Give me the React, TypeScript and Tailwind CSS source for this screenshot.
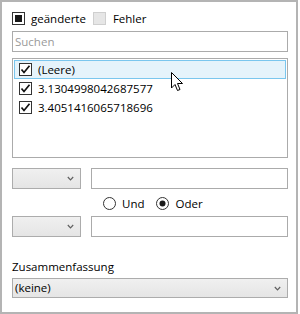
import React from "react";

const font = { fontFamily: '"Open Sans", "Noto Sans", sans-serif' };

function Check() {
  return (
    <svg width="13" height="13" viewBox="0 0 13 13" className="block">
      <rect x="0.5" y="0.5" width="12" height="12" fill="#fff" stroke="#333" />
      <path d="M2.5 6.5 L5 9.5 L10.5 2.8" fill="none" stroke="#111" strokeWidth="1.7" />
    </svg>
  );
}

function Chevron() {
  return (
    <svg width="7" height="5" viewBox="0 0 7 5" className="block">
      <path d="M0.8 1 L3.5 3.8 L6.2 1" fill="none" stroke="#606060" strokeWidth="1.2" />
    </svg>
  );
}

function Combo() {
  return (
    <div className="w-[69px] h-[21px] border border-[#acacac] bg-gradient-to-b from-[#f0f0f0] to-[#e5e5e5] flex items-center justify-end pr-[6px]">
      <Chevron />
    </div>
  );
}

function Radio({ checked }: { checked?: boolean }) {
  return (
    <svg width="13" height="13" viewBox="0 0 13 13" className="block">
      <circle cx="6.5" cy="6.5" r="6" fill="#fff" stroke="#333" />
      {checked && <circle cx="6.5" cy="6.5" r="3" fill="#1a1a1a" />}
    </svg>
  );
}

export default function App() {
  const items = ["(Leere)", "3.1304998042687577", "3.4051416065718696"];
  return (
    <div className="w-[300px] h-[314px] bg-white text-black text-[11.5px] leading-none" style={font}>
      <div className="relative w-[298px] h-[314px] border-2 border-[#b4b4b4] pl-[10px] pr-[8px] pt-[10px] flex flex-col">
        <div className="flex items-center h-[13px]">
          <div className="w-[13px] h-[13px] border border-[#333] bg-white flex items-center justify-center">
            <div className="w-[7px] h-[7px] bg-[#1a1a1a]" />
          </div>
          <span className="ml-[6px]">geänderte</span>
          <div className="ml-[7px] w-[13px] h-[13px] border border-[#cfcfcf] bg-[#e6e6e6]" />
          <span className="ml-[7px]">Fehler</span>
        </div>
        <div className="mt-[6px] h-[21px] border border-[#ababab] flex items-center pl-[2px] text-[#9a9a9a]">
          Suchen
        </div>
        <div className="mt-[6px] h-[100px] border border-[#ababab] p-px flex flex-col">
          {items.map((t, i) => (
            <div
              key={t}
              className={
                "h-[19px] flex items-center pl-[4px] border " +
                (i === 0 ? "bg-[#e5f3fb] border-[#7ac6ee]" : "border-transparent")
              }
            >
              <Check />
              <span className="ml-[6px]">{t}</span>
            </div>
          ))}
        </div>
        <div className="mt-[10px] flex items-center">
          <Combo />
          <div className="ml-[10px] flex-1 h-[21px] border border-[#ababab]" />
        </div>
        <div className="mt-[8px] h-[13px] flex items-center pl-[91px]">
          <Radio />
          <span className="ml-[6px]">Und</span>
          <div className="ml-[12px]">
            <Radio checked />
          </div>
          <span className="ml-[6px]">Oder</span>
        </div>
        <div className="mt-[6px] flex items-center">
          <Combo />
          <div className="ml-[10px] flex-1 h-[21px] border border-[#ababab]" />
        </div>
        <div className="mt-[25px] h-[10px] flex items-center">Zusammenfassung</div>
        <div className="mt-[6px] h-[20px] border border-[#acacac] bg-gradient-to-b from-[#f0f0f0] to-[#e5e5e5] flex items-center pl-[2px] pr-[6px] justify-between">
          <span>(keine)</span>
          <Chevron />
        </div>
        <svg
          className="absolute left-[169px] top-[70px]"
          width="13"
          height="20"
          viewBox="0 0 13 20"
        >
          <path
            d="M0.5 0.5 L0.5 16 L4 12.5 L6.5 18.5 L9 17.5 L6.5 11.5 L11.5 11.5 Z"
            fill="#fff"
            stroke="#000"
            strokeWidth="1"
            strokeLinejoin="miter"
          />
        </svg>
      </div>
    </div>
  );
}
